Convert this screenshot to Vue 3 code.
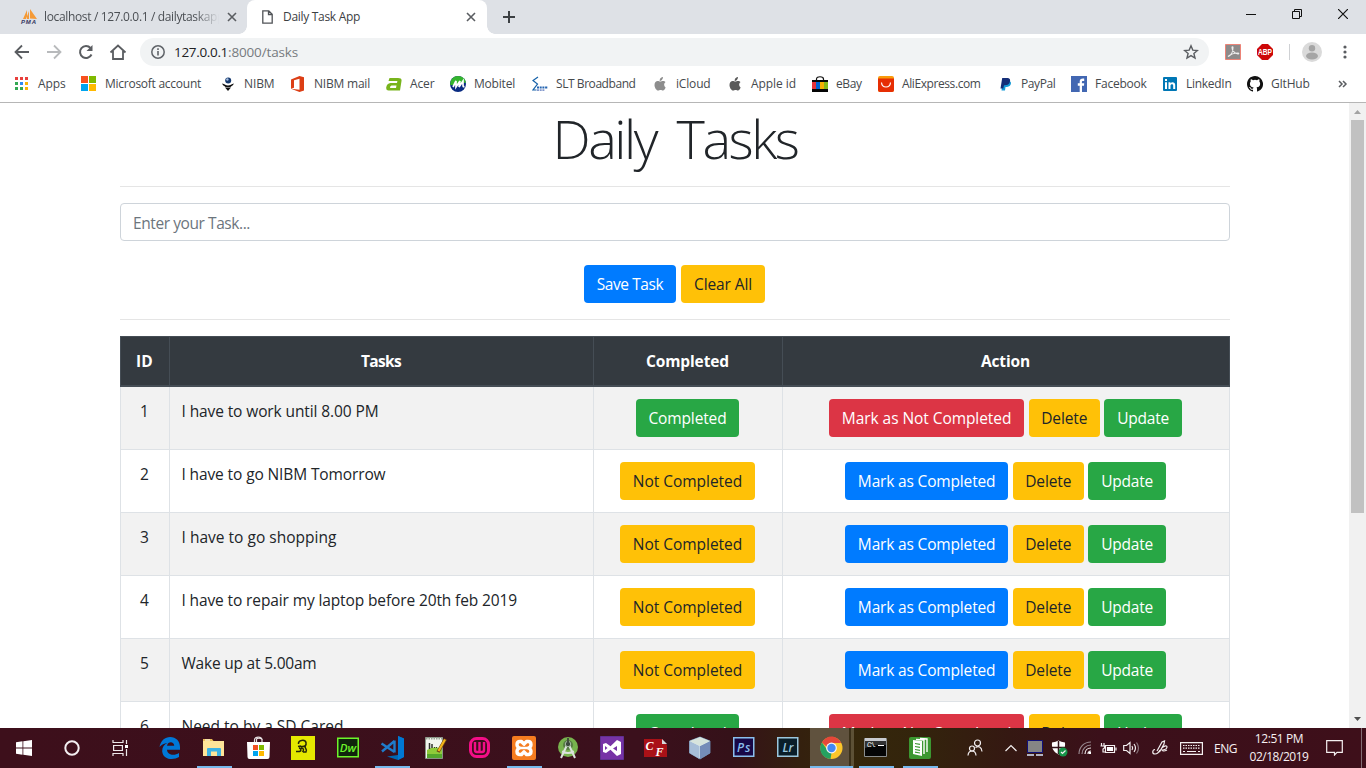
<script setup>
const fitText = (el, width) => {
  if (!width) return
  el.style.letterSpacing = '0px'
  const natural = el.getBoundingClientRect().width
  el.style.letterSpacing = (width - natural) / el.textContent.length + 'px'
}
const vFit = { mounted: (el, { value }) => fitText(el, value) }

const svg = (size, body) =>
  `<svg width="${size}" height="${size}" viewBox="0 0 ${size} ${size}" style="display:block" fill="none">${body}</svg>`

const apple = (c) =>
  svg(16, `<path fill="${c}" d="M10.900 1c.1 1.200-.4 2.200-1 2.900-.6.7-1.400 1-2.200 1-.1-1.100.3-2.100 1-2.800.6-.6 1.500-1.100 2.200-1.100zM13.600 11.500c-.4 1-1.500 3-2.700 3-.8 0-1.200-.5-2.300-.5-1.100 0-1.500.5-2.200.5C4.600 14.500 2.500 11.800 2.500 8.900c0-2.500 1.600-3.900 3.200-3.900 1 0 1.800.6 2.600.6.7 0 1.700-.7 2.900-.7.900 0 1.800.5 2.300 1.200-1.900 1.200-1.800 4.100.1 5.400z"/>`)

const dots = () => {
  const colors = ['#e8403c', '#e8403c', '#e8403c', '#34a853', '#2f8af3', '#fbb405', '#34a853', '#34a853', '#fbb405']
  return colors.map((c, i) => `<rect x="${(i % 3) * 5}" y="${1 + Math.floor(i / 3) * 5}" width="3" height="3" fill="${c}"/>`).join('')
}

const bookmarks = [
  { x: 15, t: 38, w: 27.5, label: 'Apps', icon: svg(16, dots()) },
  { x: 81, t: 105, w: 96, label: 'Microsoft account', icon: svg(16, '<path fill="#f8511f" d="M0 0h7v7H0z"/><path fill="#7fba00" d="M8 0h7v7H8z"/><path fill="#00a4ef" d="M0 8h7v7H0z"/><path fill="#ffb900" d="M8 8h7v7H8z"/>') },
  { x: 220, t: 244, w: 30.5, label: 'NIBM', icon: svg(16, '<circle cx="8.200" cy="4.500" r="3" fill="#15396e"/><circle cx="7.400" cy="3.500" r="1.200" fill="#a5bde0"/><path fill="#111" d="M2 7.500c3 .5 3.700 2 6 2s3.500-1.500 6-2c-1 2.200-2.500 2.500-3.500 3.500h-5c-1-1-2.700-1.300-3.500-3.500zM5 11.500h6L8 15z"/>') },
  { x: 290, t: 314, w: 56, label: 'NIBM mail', icon: svg(16, '<path fill="#dc3e15" fill-rule="evenodd" d="M1 3.500 9.500 0 14 1.300v13.200L9.500 16 1 12.800l8.500 1V2.800L4 4.200v7.500l-3 1z"/>') },
  { x: 386, t: 410, w: 24.5, label: 'Acer', icon: svg(16, '<path fill="#78b41c" fill-rule="evenodd" d="M3.500 2H12q4 0 3.500 3L14 14.500H2.500Q-.3 14.500.300 11T4.500 7H11l.4-2H2.500zM5.500 9.500q-1.500 0-1.500 2.500h6l.5-2.500z"/>') },
  { x: 450, t: 474, w: 41, label: 'Mobitel', icon: svg(16, '<circle cx="8" cy="8" r="8" fill="#092b82"/><path fill="#34b52e" d="M.2 9C0 3 4 0 8 0s8 3 7.800 7C10 6 5 10 .2 9z"/><path stroke="#fff" stroke-width="1.700" d="m3 11 3-6v6l4-6-1 6 4-6v3.500c0 2 .2 2.500 1.500 2"/>') },
  { x: 532, t: 556, w: 79.5, label: 'SLT Broadband', icon: svg(16, '<path stroke="#1460a8" stroke-width="1.200" d="M6 1 1 4.500 5.500 8 1 14h3.500"/><path stroke="#2464b1" stroke-width="1.800" stroke-dasharray="2 .7" d="M5 11.500h11"/><path stroke="#8297cc" stroke-width="1.800" stroke-dasharray="2 .7" d="M5 14.200h8"/>') },
  { x: 652, t: 676, w: 34.5, label: 'iCloud', icon: apple('#8d8d8d') },
  { x: 727, t: 751, w: 45, label: 'Apple id', icon: apple('#595959') },
  { x: 812, t: 836, w: 25.5, label: 'eBay', icon: svg(16, '<path stroke="#111" stroke-width="1.200" d="M4.500 5V3c0-3 7-3 7 0v2"/><path fill="#050505" d="M0 4h16v12H0z"/><path fill="#e53238" d="M0 6h4v7H0z"/><path fill="#0064d2" d="M4 6h4v7H4z"/><path fill="#f5af02" d="M8 6h4v7H8z"/><path fill="#86b817" d="M12 6h4v7h-4z"/>') },
  { x: 878, t: 902, w: 78.5, label: 'AliExpress.com', icon: svg(16, '<rect width="16" height="16" rx="2" fill="#f99b0b"/><path fill="#e62e04" d="M0 2.500h16V14q0 2-2 2H2q-2 0-2-2z"/><path stroke="#fff" stroke-width="1.200" d="M3.500 6.500c.5 6 8.500 6 9 0"/>') },
  { x: 997, t: 1021, w: 34.500, label: 'PayPal', icon: svg(16, '<path fill="#169bd7" d="M6 5h6.300c2.800.5 2.200 5.500-2.300 6H8.500L8 14.500H4.500z"/><path fill="#152f78" d="M5.200 2h5c3 .1 3.300 2 2.600 4-.8 2.800-3 3.200-5.800 3.200L6.300 12.500H3.500z"/>') },
  { x: 1071, t: 1095, w: 51.5, label: 'Facebook', icon: svg(16, '<path fill="#4267b2" d="M0 0h16v16H0z"/><path fill="#fff" d="M8.700 16V9.800H6.800V7.300h1.900V5.500c0-2.300 1.300-3.200 4.500-2.900V5h-1.300c-.8 0-1 .5-1 1v1.300h2.300L13 9.800h-2V16z"/>') },
  { x: 1162, t: 1186, w: 45.5, label: 'LinkedIn', icon: svg(16, '<rect x="1" y="1" width="14" height="14" rx="1" fill="#0077b5"/><path fill="#fff" d="M3 6.300h2V13H3zM3 3h2v2H3zM6.500 6.300h2v1c1.200-1.900 4.700-1.500 4.700 1.700v4h-2V9.500c0-1.800-2.700-1.800-2.700.2V13h-2z"/>') },
  { x: 1247, t: 1271, w: 38.5, label: 'GItHub', icon: svg(16, '<path fill="#111" d="M8 0C3.580 0 0 3.580 0 8c0 3.540 2.290 6.530 5.470 7.590.4.070.55-.17.55-.38v-1.490c-2.010.37-2.530-.49-2.690-.94-.09-.23-.48-.94-.82-1.130-.28-.15-.68-.52-.01-.53.63-.01 1.080.58 1.230.82.72 1.210 1.870.87 2.330.66.07-.52.28-.87.510-1.070-1.780-.2-3.640-.89-3.640-3.950 0-.87.310-1.590.820-2.150-.08-.2-.36-1.020.08-2.120 0 0 .67-.21 2.200.82a7.500 7.500 0 0 1 4 0c1.530-1.040 2.200-.82 2.200-.82.44 1.100.16 1.920.08 2.120.51.56.82 1.270.82 2.150 0 3.070-1.870 3.750-3.650 3.950.29.25.54.73.54 1.480v2.200c0 .21.15.46.55.38A8 8 0 0 0 8 0z"/>') }
].map((b, i, all) => ({ ...b, span: (all[i + 1] ? all[i + 1].x : 1338) - b.x, gap: b.t - b.x - 16 }))

const tasks = [
  { id: 1, text: 'I have to work until 8.00 PM', w: 197, done: true },
  { id: 2, text: 'I have to go NIBM Tomorrow', w: 204, done: false },
  { id: 3, text: 'I have to go shopping', w: 155, done: false },
  { id: 4, text: 'I have to repair my laptop before 20th feb 2019', w: 335.5, done: false },
  { id: 5, text: 'Wake up at 5.00am', w: 135, done: false },
  { id: 6, text: 'Need to by a SD Cared', w: 162, done: true }
]

const F = 'font-family="Open Sans, sans-serif" font-weight="600"'
const apps = [
  { name: 'edge', w: 44, icon: svg(24, '<path fill="#0078d7" d="M1.500 11C2.800 4.500 7 1 12.200 1 18 1 22 5.300 22 11v2.700H9c.3 5.800 8 6 12 3.200v4.200C15.500 24.500 5 24 4.200 15.500 4 11.500 6 8.500 9.500 7 6 7.400 3.500 8.500 1.500 11zM9 9.800h7.200C16.200 5.300 9.700 5 9 9.800z"/>') },
  { name: 'explorer', w: 44, run: true, icon: svg(24, '<path fill="#e9bd55" d="M1 3h9l1.500 2H22v6H1z"/><path fill="#ffe499" d="M1 5h21v15H1z"/><path fill="#fff" d="M3 3.500h5v1H3z"/><path fill="#3eb2e4" d="M5 13q0-1 1-1h12q1 0 1 1v7h-4v-4.500H9V20H5z"/>') },
  { name: 'store', w: 44, icon: svg(24, '<path stroke="#e8e3e5" stroke-width="1.200" d="M8.500 7V4c0-4 7.500-4 7.500 0v3M10.500 7V3.500c0-2 5-2 6 .5"/><path fill="#fff" d="M1 6h23l-.5 15q0 2-2 2h-18q-2 0-2-2z"/><path fill="#f25022" d="M7 9h5v5H7z"/><path fill="#7fba00" d="M13 9h5v5h-5z"/><path fill="#00a4ef" d="M7 15h5v5H7z"/><path fill="#ffb900" d="M13 15h5v5h-5z"/>') },
  { name: 'tool', w: 46, icon: svg(24, '<path fill="#e5e800" d="M0 0h24v24H0z"/><path stroke="#252707" stroke-width="1.500" d="M7.500 8C7 4 14 3 15 6.500c.5 3-1 4-3.500 4H8.500M7 10.500l3-.5M5 15.500h3.500c2-.5 2-3-.5-3.500M10 12c3 0 3 2 1.500 4M14.500 9.500c-2 3 2.500 3 .5 6.500h-3"/>') },
  { name: 'dw', w: 44, icon: svg(24, `<path fill="#10240c" stroke="#6df52a" stroke-width="1.500" d="M1.750 2.250h20.500v18.500H1.750z"/><text x="3.700" y="16" font-size="11.500" fill="#6df52a" ${F} textLength="16.500" lengthAdjust="spacingAndGlyphs">Dw</text>`) },
  { name: 'code', w: 44, run: true, icon: svg(24, '<path fill="#0069b5" d="M18 0v19L7 20.500 18 24l6-3V2.500z"/><path fill="#0078d4" d="M18 0 24 2.500V21l-6 3z"/><path stroke="#1f7ccb" stroke-width="2.400" d="M14.500 5 2 15.500M1.500 7.500l13 8.500M14.500 4.500v12"/>') },
  { name: 'notes', w: 44, icon: svg(24, '<path fill="#f2f5ef" stroke="#899386" d="M1.500 1.500h17v21h-17z"/><path stroke="#9ba796" stroke-width="2" stroke-dasharray="1.500 1" d="M2 2.500h17"/><path fill="#8ecb39" d="M3 14q7-5 15-1v9H3z"/><path fill="#54a72c" d="M3 18h15v4H3z"/><path stroke="#30342e" stroke-width="1.500" d="M5.500 7v6M8 8v4"/><path stroke="#30342e" d="M10 11.500h1M12 11.500h1"/><path stroke="#6a4315" stroke-width="3.500" d="M21.500 3 14 16"/><path stroke="#f5b51b" stroke-width="2.200" d="M21 3.500 14.500 15"/>') },
  { name: 'wamp', w: 44, icon: svg(24, '<rect x="2.500" y="2.500" width="18" height="18" rx="6" stroke="#f30e87" stroke-width="3"/><path stroke="#f30e87" stroke-width="2.400" d="M7 6v8q0 2 2 2h5q2 0 2-2V6M11.500 6v9M1 11.500h3M19 11.500h3"/>') },
  { name: 'xampp', w: 44, run: true, icon: svg(24, '<rect width="24" height="24" rx="2" fill="#f57c20"/><path stroke="#fff" stroke-width="3.400" stroke-linejoin="round" d="M8 5.500h1.500L12 8.200l2.500-2.700H16q3 0 3 3 0 2.500-2.500 3.500 2.500 1 2.500 3.500 0 3-3 3h-1.500L12 15.800l-2.500 2.700H8q-3 0-3-3Q5 13 7.500 12 5 11 5 8.500q0-3 3-3z"/><path stroke="#fff" stroke-width="2.500" d="M8 12h8"/>') },
  { name: 'android', w: 44, icon: svg(24, '<circle cx="12" cy="11" r="10" fill="#78b34e"/><circle cx="12" cy="9" r="5" fill="#577e43"/><path stroke="#dce3dd" stroke-width="2" d="M11 9 5 22M13 9l6 13M6 15.500q6 3 12 0"/><circle cx="12" cy="8" r="2.700" fill="#3d4b3e" stroke="#a6b8a4"/><path fill="#42503d" d="M11 2h2v4h-2z"/>') },
  { name: 'vs', w: 44, icon: svg(24, '<path fill="#7733a6" stroke="#603090" d="M.5.500h23v23H.5z"/><path fill="#fff" fill-rule="evenodd" d="m3 8 3-1 4.500 3.200L17 4l4 2v12l-4 2-6.500-6.200L6 17l-3-1zm2 2v4l2.500-2zm12 0-4 2.500 4 2.500z"/>') },
  { name: 'cf', w: 44, icon: svg(24, '<path fill="#aa1117" d="M0 3h18l5 6v12H0z"/><path fill="#d7dadd" d="M18 3v5h5z"/><text x="1.500" y="14" font-family="Liberation Serif, serif" font-size="12" font-weight="700" fill="#fff">C</text><text x="11.500" y="19.500" font-family="Liberation Serif, serif" font-size="12" font-weight="700" fill="#fff">F</text>') },
  { name: 'cube', w: 44, icon: svg(24, '<path fill="#d8e9ef" stroke="#647fa2" d="M12 1 22 5v12l-10 6L1.500 17V5z"/><path fill="#a7bed8" d="m1.500 5 10 5v13l-10-6z"/><path fill="#748cb8" d="m12 10 10-5v12l-10 6z"/><path fill="#d7e4dd" d="M12 1 22 5l-10 5L1.500 5z"/>') },
  { name: 'ps', w: 44, icon: svg(24, `<path fill="#180846" stroke="#8abfed" stroke-width="1.500" d="M1.750 1.750h20v18.500h-20z"/><text x="5" y="15.500" font-size="12" fill="#8abfed" ${F} textLength="13.500">Ps</text>`) },
  { name: 'lr', w: 44, icon: svg(24, `<path fill="#0a1e29" stroke="#9bc7dd" stroke-width="1.500" d="M1.750 1.750h20v18.500h-20z"/><text x="6.500" y="15.500" font-size="12" fill="#9bc7dd" ${F} textLength="11">Lr</text>`) },
  { name: 'chrome', w: 44, run: true, active: true, icon: svg(24, '<circle cx="11.500" cy="12" r="11" fill="#fbc62b"/><path fill="#e54739" d="M2 6.500C7-2 17-1 21.200 7H11.500v8z"/><path fill="#25a160" d="M2 6.500 8 15l3.500 2-1 6C1 22-2 12.500 2 6.500z"/><circle cx="11.500" cy="12" r="5.400" fill="#f6f6f4"/><circle cx="11.500" cy="12" r="4.200" fill="#4388f3"/>') },
  { name: 'cmd', w: 44, run: true, icon: svg(24, '<path fill="#050505" stroke="#8a8d8e" d="M.5 2.500h22v18H.5z"/><path fill="#c9cbd0" d="M1 2h21v3H1z"/><path fill="#323232" d="M1 12Q11 8 22 9v-4H1z"/><text x="3" y="10.500" font-family="Liberation Mono, monospace" font-size="6.500" fill="#fff" textLength="10">C:\\.</text><path stroke="#fff" d="M14 9.500h6"/>') },
  { name: 'docs', w: 44, run: true, icon: svg(24, '<rect x="1" y="1" width="22" height="22" rx="2" fill="#3c9731"/><path fill="#fff" d="m5 4 9 1v15l-9-2z"/><path stroke="#fff" stroke-width="1.400" d="M8 3.500l8 .5v14M12 2.500l7 .5v13"/><path stroke="#3c9731" stroke-width="1.200" d="m7 7.500 5 .8M7 10.500l5 .8M7 13.500l5 .8M7 16.200l5 .8"/>') }
]
</script>

<template>
  <div class="screen">
    <div class="tabs">
      <div class="tab first">
        <svg class="pma" width="18" height="16" viewBox="0 0 18 16"><path d="M7 1 3 10h4zM10 0v9.500l7 .5zM9 2v8H6z" fill="#f59a36"/><text x="1" y="15" font-family="Liberation Sans, sans-serif" font-size="6" font-weight="700" font-style="italic" fill="#33355f" textLength="15">PMA</text></svg>
        <div class="fade"><span v-fit="180">localhost / 127.0.0.1 / dailytaskapp</span></div>
        <svg class="x" width="10" height="10" viewBox="0 0 10 10"><path d="m1 1 8 8M9 1 1 9" /></svg>
      </div>
      <div class="tab active">
        <svg class="file" width="11" height="14" viewBox="0 0 11 14"><path d="M.8.800h6L10.200 4.300v8.900H.8zM6.500 1v3.500H10" fill="none" stroke="#505357" stroke-width="1.300"/></svg>
        <div class="name"><span v-fit="77">Daily Task App</span></div>
        <svg class="x" width="10" height="10" viewBox="0 0 10 10"><path d="m1 1 8 8M9 1 1 9" /></svg>
      </div>
      <svg class="plus" width="12" height="12" viewBox="0 0 12 12"><path d="M6 0v12M0 6h12" stroke="#3c4043" stroke-width="2"/></svg>
      <div class="win">
        <svg width="10" height="10" viewBox="0 0 10 10"><path d="M0 5.500h10"/></svg>
        <svg width="10" height="10" viewBox="0 0 10 10"><path d="M.5 2.500h7v7h-7zM2.500 2.500v-2h7v7h-2"/></svg>
        <svg width="10" height="10" viewBox="0 0 10 10"><path d="m0 0 10 10M10 0 0 10" stroke-width="1.200"/></svg>
      </div>
    </div>

    <div class="toolbar">
      <div class="nav">
        <svg width="16" height="16" viewBox="0 0 16 16"><path d="M15 8H2M8 1.500 1.500 8 8 14.500" stroke="#5a5d61" stroke-width="1.800"/></svg>
        <svg width="16" height="16" viewBox="0 0 16 16"><path d="M1 8h13M8 1.500 14.500 8 8 14.500" stroke="#b8babc" stroke-width="1.800"/></svg>
        <svg width="16" height="16" viewBox="0 0 16 16"><path d="M13.500 10.500A6 6 0 1 1 12.500 4" stroke="#5a5d61" stroke-width="2"/><path d="M14.500 1v6h-6z" fill="#5a5d61"/></svg>
        <svg width="18" height="16" viewBox="0 0 18 16"><path d="M1.500 8.500 9 1.500l7.500 7M4 7v8h10V7" stroke="#5a5d61" stroke-width="1.800"/></svg>
      </div>
      <div class="omni">
        <svg width="14" height="14" viewBox="0 0 14 14"><circle cx="7" cy="7" r="6.200" stroke="#5f6368" stroke-width="1.500"/><path d="M7 6v4.500M7 3.300v1.600" stroke="#5f6368" stroke-width="1.600"/></svg>
        <div class="url"><span v-fit="54">127.0.0.1</span><span v-fit="70" class="path">:8000/tasks</span></div>
        <svg class="star" width="16" height="16" viewBox="0 0 16 16"><path d="m8 1.800 1.800 4.300 4.600.4-3.500 3 1.100 4.600L8 11.600l-4 2.500 1.100-4.600-3.500-3 4.600-.4z" stroke="#5a5d61" stroke-width="1.400"/></svg>
      </div>
      <svg class="pdf" width="16" height="16" viewBox="0 0 16 16"><path d="M.5.500h15v15H.5z" fill="#8d8a8a" stroke="#ec8377"/><path d="M3 12.500c3-1 5-5 5-9 0-1-1-1-1 0 0 3 2.500 6 6 6.500 1 .1 1-1 0-1-3 0-7 1-10 3.500z" stroke="#eee" stroke-width="1.100"/></svg>
      <svg class="abp" width="16" height="16" viewBox="0 0 16 16"><path d="M5 0h6l5 5v6l-5 5H5l-5-5V5z" fill="#cd0808"/><text x="1" y="11" font-family="Liberation Sans, sans-serif" font-weight="700" font-size="8.500" fill="#fff" textLength="14" lengthAdjust="spacingAndGlyphs">ABP</text></svg>
      <i class="sep"></i>
      <svg class="avatar" width="20" height="20" viewBox="0 0 20 20"><circle cx="10" cy="10" r="10" fill="#dadada"/><circle cx="10" cy="6.200" r="3.200" fill="#a5a5a5"/><ellipse cx="10" cy="14" rx="6" ry="3.500" fill="#a5a5a5"/></svg>
      <svg class="menu" width="4" height="14" viewBox="0 0 4 14"><circle cx="2" cy="2" r="1.600"/><circle cx="2" cy="7" r="1.600"/><circle cx="2" cy="12" r="1.600"/></svg>
    </div>

    <div class="bookmarks">
      <div v-for="b in bookmarks" :key="b.label" class="bm" :style="{ width: b.span + 'px', gap: b.gap + 'px' }">
        <i class="ico" v-html="b.icon"></i><span v-fit="b.w">{{ b.label }}</span>
      </div>
      <svg width="10" height="8" viewBox="0 0 10 8"><path d="m1 1 3 3-3 3M5 1l3 3-3 3" stroke="#5a5d61" stroke-width="1.500"/></svg>
    </div>

    <div class="view">
      <main>
        <h1><span v-fit="245">Daily Tasks</span></h1>
        <hr />
        <div class="input"><span v-fit="117">Enter your Task...</span></div>
        <div class="actions">
          <div class="btn blue save"><span v-fit="66.500">Save Task</span></div>
          <div class="btn yellow clear"><span v-fit="58">Clear All</span></div>
        </div>
        <hr />
        <div class="table">
          <div class="row head">
            <div><span v-fit="17">ID</span></div>
            <div><span v-fit="40">Tasks</span></div>
            <div><span v-fit="83">Completed</span></div>
            <div><span v-fit="49">Action</span></div>
          </div>
          <div v-for="(t, i) in tasks" :key="t.id" class="row" :class="{ odd: i % 2 === 0 }">
            <div class="id">{{ t.id }}</div>
            <div class="txt"><span v-fit="t.w">{{ t.text }}</span></div>
            <div>
              <div v-if="t.done" class="btn green comp"><span v-fit="78">Completed</span></div>
              <div v-else class="btn yellow ncomp"><span v-fit="109.500">Not Completed</span></div>
            </div>
            <div>
              <div v-if="t.done" class="btn red marknot"><span v-fit="169.500">Mark as Not Completed</span></div>
              <div v-else class="btn blue mark"><span v-fit="137.500">Mark as Completed</span></div>
              <div class="btn yellow del"><span v-fit="46">Delete</span></div>
              <div class="btn green upd"><span v-fit="52">Update</span></div>
            </div>
          </div>
        </div>
      </main>
      <div class="scroll">
        <svg width="17" height="17" viewBox="0 0 17 17"><path d="M5 11h7L8.500 7z" fill="#a3a3a3"/></svg>
        <i class="thumb"></i>
        <svg class="down" width="17" height="17" viewBox="0 0 17 17"><path d="M5 6h7l-3.500 4z" fill="#505050"/></svg>
      </div>
    </div>

    <div class="taskbar">
      <div class="sys"><svg width="16" height="16" viewBox="0 0 16 16"><path fill="#fff" d="M0 2.200 6.500 1.300v6.200H0zM7.300 1.200 16 0v7.500H7.300zM0 8.400h6.500v6.300L0 13.800zM7.300 8.400H16V16l-8.700-1.200z"/></svg></div>
      <div class="sys"><svg width="16" height="16" viewBox="0 0 16 16"><circle cx="8" cy="8" r="6.700" fill="none" stroke="#f3eef0" stroke-width="2"/></svg></div>
      <div class="sys last"><svg width="17" height="16" viewBox="0 0 17 16" fill="none" stroke="#eee8ea" stroke-width="1.200"><path d="M1 0v2.500h10V0M1.600 5.500h8.800v5H1.600zM1 16v-2.500h10V16M14.500 0v4M14.500 9v7"/><path d="M13 5h3v3h-3z" fill="#fff" stroke="none"/></svg></div>
      <div v-for="a in apps" :key="a.name" class="app" :class="[a.name, { run: a.run, active: a.active }]" :style="{ width: a.w + 'px' }">
        <i v-html="a.icon"></i>
      </div>
      <div class="tray">
        <svg class="people" width="16" height="18" viewBox="0 0 16 18"><circle cx="10.500" cy="4" r="3"/><circle cx="5" cy="9.500" r="2.500"/><path d="M1 16.500c.5-6 7.500-6 8 0M8.500 8.500c3-2 6-.5 6.500 4"/></svg>
        <svg class="chev" width="14" height="8" viewBox="0 0 14 8"><path d="m1.500 7 5.500-5.500L12.500 7"/></svg>
        <svg class="mon" width="16" height="16" viewBox="0 0 16 16"><path d="M.5.500h15v12H.5z" fill="#858585" stroke="#10107a" stroke-width="1"/><path d="M0 14h7v2H0zM9 14h7v2H9z" fill="#b2b3c2" stroke="none"/></svg>
        <svg class="shield" width="17" height="17" viewBox="0 0 17 17"><path d="M1 2.500Q5 2 7.500.500 10 2 14 2.500c.5 6-1 9-6.500 12C2 11.500.5 8 1 2.500z" fill="#fff" stroke="none"/><path d="M7.500 1v13M1 7.500h13" stroke="#301218" stroke-width="1.500"/><circle cx="12" cy="12" r="4.500" fill="#159447" stroke="none"/><path d="m10 12 1.500 1.500 3-3"/></svg>
        <svg class="wifi" width="13" height="14" viewBox="0 0 13 14"><g stroke="#998990"><path d="M1 13C1 6 6 1 13 1"/><path d="M4 13c0-5 4-9 9-9"/></g><path d="M7 13c0-3.500 2.500-6 6-6M10 13c0-2 1-3 3-3"/><path d="M11 11h2v2h-2z" fill="#fff" stroke="none"/></svg>
        <svg class="bat" width="17" height="13" viewBox="0 0 17 13"><path d="M5.500 3.500h9v7h-9zM16 5.500v3M1.500 1v3M4 1v3M.5 4h4v2L3 7v3h3"/><path d="M7 5h6v4H7z" fill="#fff" stroke="none"/></svg>
        <svg class="vol" width="17" height="14" viewBox="0 0 17 14"><path d="M.7 4.500h2.800L7 1.500v11L3.500 9.500H.7zM9 5q1.300 2 0 4M11 3q3 4 0 8"/><path d="M13.500 1.500q4 5.500 0 11" stroke="#8a767d"/></svg>
        <svg class="pen" width="17" height="16" viewBox="0 0 17 16"><path d="M3 9.500c-3 .5-3 4.500 0 4.500s4-2 5-4M5 11l5-9 2.500-1L12 4 7.500 12M9 9c2-3 6-4 6-2s-3 3-5 3c1 2 3 1 5 0"/></svg>
        <svg class="key" width="23" height="13" viewBox="0 0 23 13"><path d="M.6.600h21.800v11.800H.6z"/><path d="M3 3.500h17M3 6.200h17" stroke-dasharray="1.500 1"/><path d="M3 9.500h2M7 9.500h9M18 9.500h2"/></svg>
        <div class="eng"><span v-fit="23">ENG</span></div>
        <div class="clock"><span v-fit="48.500">12:51 PM</span><span v-fit="59">02/18/2019</span></div>
        <svg class="note" width="17" height="16" viewBox="0 0 17 16"><path d="M.7.700h15.600v11.600H11L8.500 15V12.300H.7z"/></svg>
        <i class="edge-line"></i>
      </div>
    </div>
  </div>
</template>

<style>
html, body { margin: 0; overflow: hidden; }
</style>

<style scoped>
* { box-sizing: border-box; }
.screen { width: 1366px; height: 768px; display: flex; flex-direction: column; overflow: hidden; background: #fff; font-family: "Open Sans", "Noto Sans", sans-serif; color: #212529; }
span { white-space: nowrap; display: inline-block; }
svg { display: block; flex: none; }
.ico { display: block; width: 16px; flex: none; }

.tabs { height: 34px; flex: none; background: #dee1e6; display: flex; align-items: center; font-size: 12px; color: #4b4f54; }
.tab { height: 34px; display: flex; align-items: center; position: relative; }
.tab span { line-height: 16px; margin-bottom: 2px; }
.first { width: 247px; padding-left: 20px; }
.pma { margin-right: 6px; }
.fade { width: 175px; overflow: hidden; margin-right: 8px; -webkit-mask-image: linear-gradient(90deg, #000 86%, transparent); mask-image: linear-gradient(90deg, #000 86%, transparent); }
.x { fill: none; stroke: #5a5d61; stroke-width: 1.6; }
.active.tab { width: 240px; background: #fff; border-radius: 8px 8px 0 0; padding-left: 15px; color: #3c4043; }
.active.tab::before, .active.tab::after { content: ""; position: absolute; bottom: 0; width: 8px; height: 8px; }
.active.tab::before { left: -8px; background: radial-gradient(circle at 0 0, transparent 7.5px, #fff 8px); }
.active.tab::after { right: -8px; background: radial-gradient(circle at 100% 0, transparent 7.5px, #fff 8px); }
.file { margin-right: 10px; }
.name { width: 183px; }
.plus { margin-left: 16px; }
.win { margin-left: auto; margin-right: 18px; margin-bottom: 6px; display: flex; gap: 36px; fill: none; stroke: #111; }

.toolbar { height: 36px; flex: none; display: flex; align-items: center; fill: none; }
.nav { width: 140px; padding-left: 14px; display: flex; gap: 16px; }
.nav svg:last-child { margin-left: -1px; }
.omni { width: 1069px; height: 28px; border-radius: 14px; background: #f1f3f4; display: flex; align-items: center; padding: 0 10px 0 11px; }
.url { font-size: 13.5px; line-height: 20px; margin-left: 9px; display: flex; color: #202124; }
.path { color: #777b80; }
.star { margin-left: auto; }
.pdf { margin-left: 16px; }
.abp { margin-left: 16px; }
.sep { width: 1px; height: 16px; background: #cfd1d4; margin-left: 16px; }
.avatar { margin-left: 12px; }
.menu { margin-left: 21px; fill: #5a5d61; }

.bookmarks { height: 33px; flex: none; border-bottom: 1px solid #b6b6b6; display: flex; align-items: center; padding: 0 0 5px 15px; font-size: 12px; line-height: 16px; color: #45494d; fill: none; }
.bm { display: flex; align-items: center; flex: none; }

.view { height: 625px; flex: none; display: flex; justify-content: space-between; overflow: hidden; }
main { width: 1110px; margin-left: 120px; font-size: 15.5px; line-height: 24px; }
h1 { margin: 0; height: 67px; font-size: 54px; line-height: 71px; font-weight: 300; text-align: center; word-spacing: 9px; }
hr { border: 0; border-top: 1px solid #e5e5e5; margin: 16px 0; height: 0; }
.input { height: 38px; border: 1px solid #ced4da; border-radius: 4px; padding: 7px 12px; color: #6c757d; }
.actions { margin-top: 24px; display: flex; justify-content: center; gap: 5px; padding-right: 1px; }
.btn { height: 38px; line-height: 38px; border-radius: 4px; display: flex; justify-content: center; color: #fff; flex: none; }
.blue { background: #007bff; }
.yellow { background: #ffc107; color: #212529; }
.green { background: #28a745; }
.red { background: #dc3545; }
.save { width: 92px; }
.clear { width: 84px; }
.comp { width: 103px; }
.ncomp { width: 135px; }
.marknot { width: 195px; }
.mark { width: 163px; }
.del { width: 71.5px; }
.upd { width: 77.5px; }
.row { display: grid; grid-template-columns: 50px 424px 189px 447px; height: 63px; }
.row > div { border-right: 1px solid #dee2e6; border-bottom: 1px solid #dee2e6; padding: 12px 1px 0 0; display: flex; justify-content: center; gap: 4.4px; }
.row > div:first-child { border-left: 1px solid #dee2e6; }
.row > .txt { justify-content: flex-start; padding-left: 11.5px; }
.row.odd { background: #f2f2f2; }
.row.head { height: 51px; background: #343a40; color: #fff; font-weight: 700; }
.row.head > div { border-color: #454d55; border-top: 1px solid #454d55; border-bottom-width: 2px; }
.scroll { width: 17px; background: #f1f1f1; display: flex; flex-direction: column; align-items: center; }
.thumb { width: 13px; height: 393px; background: #c1c1c1; }
.down { margin-top: auto; }

.taskbar { height: 40px; flex: none; display: flex; background: linear-gradient(90deg, #3d0f1b 0, #3b101c 640px, #351119 730px, #34200e 800px, #35270b 850px, #33240c 920px, #351812 1010px, #3b101a 1100px, #3e0f1a 100%); }
.sys { width: 48px; display: flex; align-items: center; justify-content: center; }
.last { margin-right: 4px; }
.app { display: flex; align-items: center; justify-content: center; position: relative; flex: none; }
.run::after { content: ""; position: absolute; left: 4.5px; width: 35px; bottom: 0; height: 2px; background: #76b9ed; }
.app.active { background: linear-gradient(90deg, #60523e 0 39px, #3b3019 39px 41px, #5d5136 41px); }
.active.run::after { left: 0; width: 43px; }
.tray { flex: 1; display: flex; align-items: center; fill: none; stroke: #f4eff0; stroke-width: 1.2; color: #f7f1f3; }
.people { margin-left: 25px; }
.chev { margin-left: 21px; }
.mon { margin-left: 9px; }
.shield { margin-left: 8px; }
.wifi { margin-left: 10px; }
.bat { margin-left: 9px; }
.vol { margin-left: 6px; }
.pen { margin-left: 12px; }
.key { margin-left: 11px; }
.eng { margin-left: 11px; width: 24px; font-size: 12px; }
.clock { width: 62px; margin-left: 10px; display: flex; flex-direction: column; align-items: center; font-size: 12px; line-height: 18px; }
.note { margin-left: 16px; }
.edge-line { width: 1px; height: 40px; background: #836d74; margin-left: auto; margin-right: 4px; }
</style>
